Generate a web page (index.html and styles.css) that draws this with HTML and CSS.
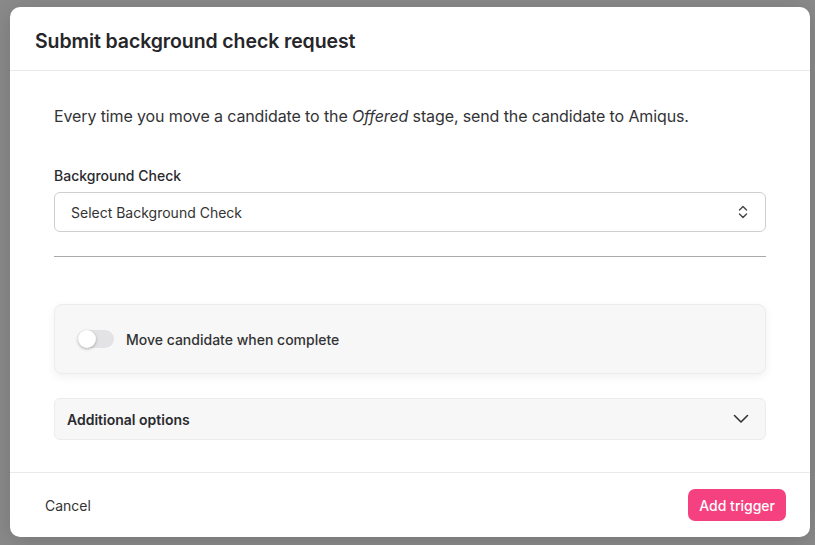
FILE: index.html
```html
<!DOCTYPE html>
<html lang="en">
<head>
  <meta charset="UTF-8">
  <title>Submit background check request</title>
  <link rel="stylesheet" href="styles.css">
</head>
<body>
  <div class="backdrop">
    <div class="modal">
      <div class="modal__header">
        <h2 class="modal__title">Submit background check request</h2>
      </div>
      <div class="modal__body">
        <p class="modal__intro">Every time you move a candidate to the <em>Offered</em> stage, send the candidate to Amiqus.</p>

        <label class="field__label">Background Check</label>
        <div class="select">
          <span>Select Background Check</span>
          <svg class="select__icon" width="12" height="16" viewBox="0 0 12 16" fill="none" stroke="#444" stroke-width="1.4" stroke-linecap="round" stroke-linejoin="round">
            <path d="M2.5 6 L6 2.5 L9.5 6"/>
            <path d="M2.5 10 L6 13.5 L9.5 10"/>
          </svg>
        </div>

        <hr class="divider">

        <div class="toggle-card">
          <span class="toggle"><span class="toggle__knob"></span></span>
          <span class="toggle-card__text">Move candidate when complete</span>
        </div>

        <div class="accordion">
          <span class="accordion__title">Additional options</span>
          <svg width="16" height="10" viewBox="0 0 16 10" fill="none" stroke="#333" stroke-width="1.6" stroke-linecap="round" stroke-linejoin="round">
            <path d="M1.5 1.5 L8 8 L14.5 1.5"/>
          </svg>
        </div>
      </div>
      <div class="modal__footer">
        <button class="btn btn--ghost">Cancel</button>
        <button class="btn btn--primary">Add trigger</button>
      </div>
    </div>
  </div>
</body>
</html>
```
FILE: styles.css
```css
*,
*::after,
*::before {
  padding: 0;
  margin: 0;
  box-sizing: border-box;
}

:root {
  --text: #2a2a2e;
  --muted-border: #e9e9eb;
  --panel: #f7f7f8;
  --pink: #f5417f;
}

body {
  background-color: #8a8a8b;
  font-family: Inter, "Noto Sans", sans-serif;
  color: var(--text);
  overflow: hidden;
}

.backdrop {
  width: 815px;
  height: 545px;
  padding: 7px 0 0 10px;
}

.modal {
  width: 800px;
  height: 530px;
  background: #fff;
  border-radius: 10px;
  display: flex;
  flex-direction: column;
  box-shadow: 0 4px 24px rgba(0, 0, 0, 0.15);
}

.modal__header {
  height: 64px;
  padding: 4px 25px 0;
  display: flex;
  align-items: center;
  border-bottom: 1px solid var(--muted-border);
}

.modal__title {
  font-size: 19.5px;
  font-weight: 600;
  letter-spacing: -0.1px;
  color: #26262a;
}

.modal__body {
  flex: 1;
  padding: 35px 44px 0;
}

.modal__intro {
  font-size: 16px;
  line-height: 20px;
  letter-spacing: -0.12px;
  color: #333336;
  margin-bottom: 41px;
}

.modal__intro em {
  font-style: italic;
}

.field__label {
  display: block;
  font-size: 14px;
  font-weight: 500;
  line-height: 18px;
  margin-bottom: 7px;
  color: #2a2a2e;
}

.select {
  height: 40px;
  border: 1px solid #cfcfd3;
  border-radius: 6px;
  padding: 0 16px;
  display: flex;
  align-items: center;
  justify-content: space-between;
  font-size: 14px;
  color: #333;
}

.divider {
  border: 0;
  border-top: 1px solid #a9a9ad;
  margin: 24px 0 47px;
}

.toggle-card {
  height: 70px;
  background: var(--panel);
  border: 1px solid #ececee;
  border-radius: 8px;
  box-shadow: 0 3px 10px rgba(0, 0, 0, 0.06);
  padding: 0 23px;
  display: flex;
  align-items: center;
  gap: 12px;
  margin-bottom: 24px;
}

.toggle {
  width: 36px;
  height: 18px;
  border-radius: 9px;
  background: #e3e3e6;
  display: flex;
  align-items: center;
}

.toggle__knob {
  width: 18px;
  height: 18px;
  border-radius: 50%;
  background: #fff;
  box-shadow: 0 1px 3px rgba(0, 0, 0, 0.3);
}

.toggle-card__text {
  font-size: 14px;
  font-weight: 500;
  color: #333;
}

.accordion {
  height: 42px;
  background: var(--panel);
  border: 1px solid #ececee;
  border-radius: 6px;
  padding: 0 16px 0 12px;
  display: flex;
  align-items: center;
  justify-content: space-between;
}

.accordion__title {
  font-size: 14px;
  font-weight: 600;
  color: #2a2a2e;
}

.modal__footer {
  height: 65px;
  border-top: 1px solid var(--muted-border);
  display: flex;
  align-items: center;
  justify-content: space-between;
  padding: 0 24px 0 35px;
}

.btn {
  font-family: inherit;
  font-size: 14px;
  border: 0;
  cursor: pointer;
}

.btn--ghost {
  background: none;
  color: #333;
  padding: 8px 0;
}

.btn--primary {
  background: var(--pink);
  color: #fff;
  height: 32px;
  padding: 0 11px;
  border-radius: 7px;
  font-weight: 500;
}
```
